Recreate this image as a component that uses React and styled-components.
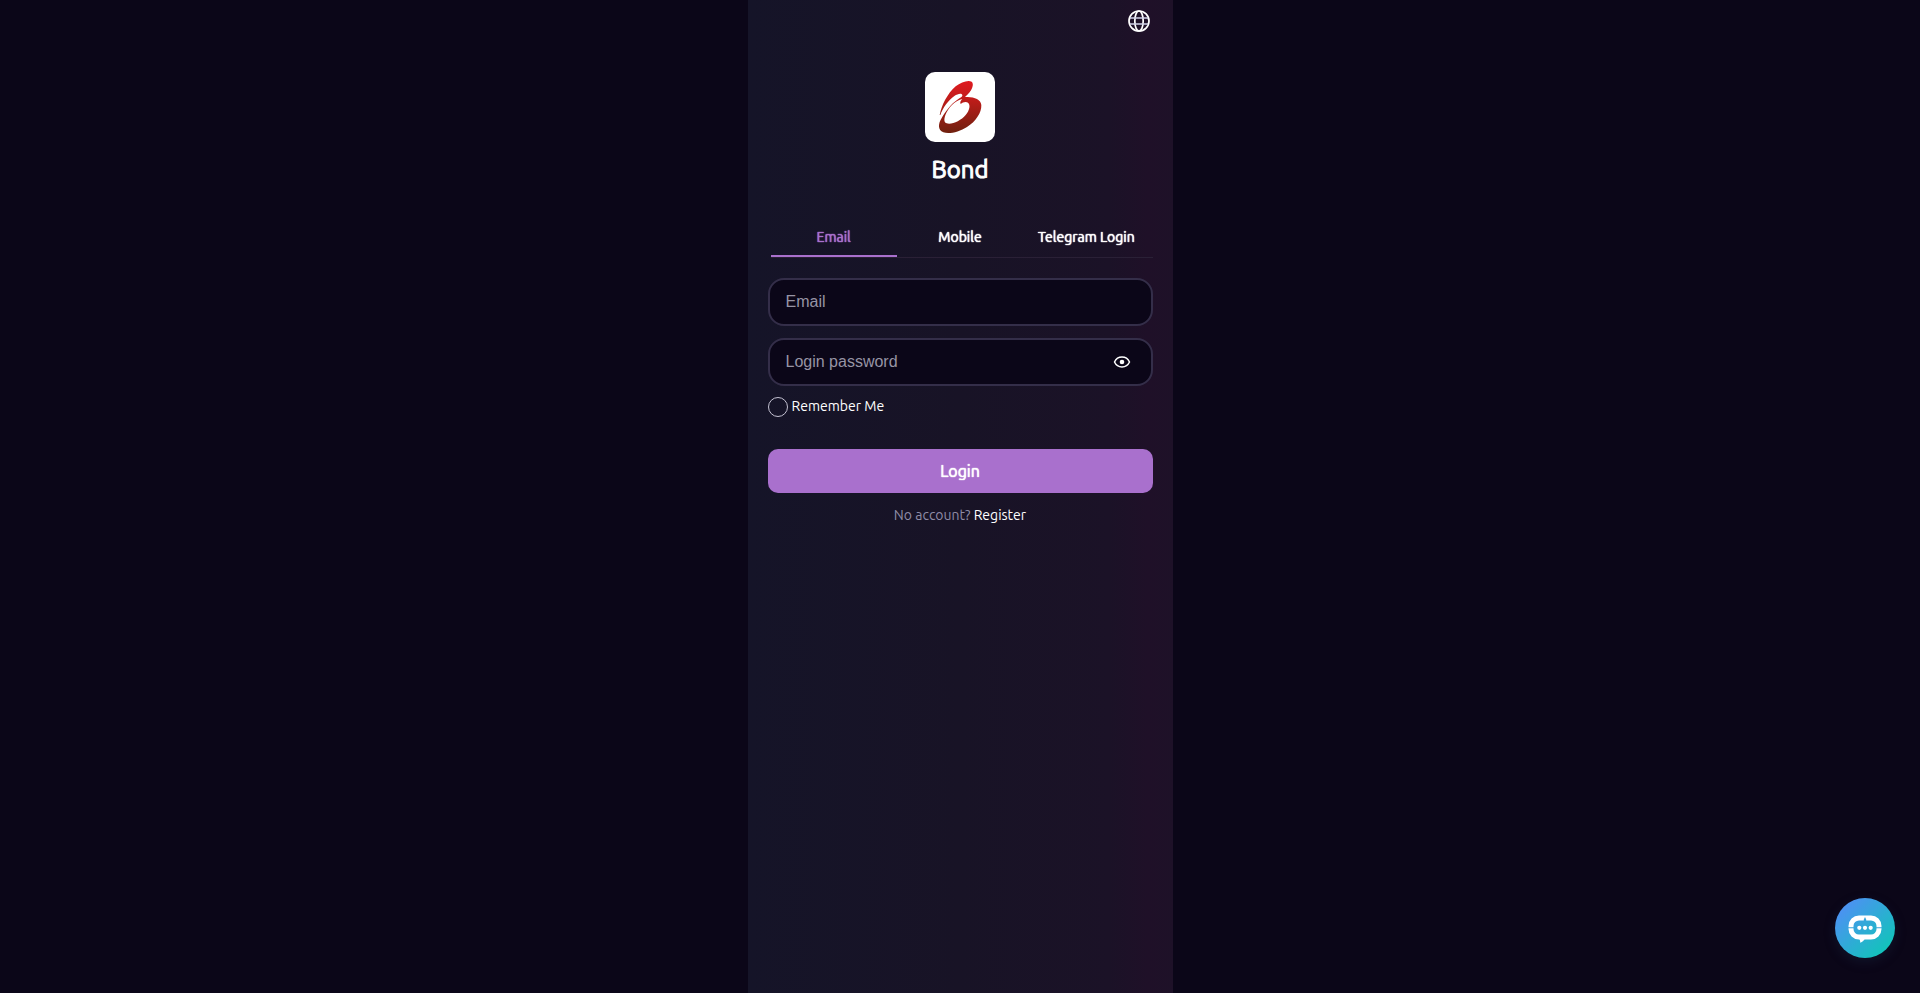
import React from "react";
import styled, { createGlobalStyle, css } from "styled-components";

const GlobalStyle = createGlobalStyle`
  * {
    box-sizing: border-box;
  }
  body {
    margin: 0;
    background-color: #0b0618;
    color: #ffffff;
    font-family: Ubuntu, "Noto Sans", sans-serif;
    font-size: 14px;
  }
  button {
    font-family: inherit;
    color: inherit;
    border: none;
    background: none;
    padding: 0;
    cursor: pointer;
  }
`;

const tabs = ["Email", "Mobile", "Telegram Login"];

const GlobeIcon = () => (
  <svg width="24" height="24" viewBox="0 0 24 24" fill="none" stroke="#ffffff" strokeWidth="1.7">
    <circle cx="12" cy="12" r="10" />
    <ellipse cx="12" cy="12" rx="4.2" ry="10" />
    <path d="M3 9h18M3 15h18" stroke="#cfcfe6" />
  </svg>
);

const EyeIcon = () => (
  <svg width="18" height="16" viewBox="0 0 18 16">
    <path
      d="M1.5 8C3 4.800 5.600 3.100 9 3.100s6 1.700 7.500 4.900c-1.500 3.200-4.100 4.900-7.500 4.900S3 11.200 1.500 8z"
      fill="none"
      stroke="#ffffff"
      strokeWidth="1.500"
    />
    <circle cx="9" cy="8" r="2.300" fill="#ffffff" />
  </svg>
);

const BondLogo = () => (
  <svg width="70" height="70" viewBox="0 0 210 210" role="img" aria-label="Bond logo">
    <defs>
      <linearGradient id="bond" x1="0" y1="26" x2="0" y2="184" gradientUnits="userSpaceOnUse">
        <stop offset="0" stopColor="#e01a20" />
        <stop offset="0.35" stopColor="#c01c1a" />
        <stop offset="1" stopColor="#6e200e" />
      </linearGradient>
    </defs>
    <path
      fill="url(#bond)"
      fillRule="evenodd"
      d="M44 129C50 100 66 66 92 43C108 30 130 23 140 29C148 36 143 55 120 75C145 73 168 81 169 99C170 122 152 149 126 165C103 180 72 187 55 181C38 174 39 155 50 138C61 118 79 95 97 83C106 77 113 74 112 69C110 62 98 65 88 72C70 86 54 106 46 129Z
         M112 81C98 83 81 96 69 114C57 133 54 151 65 154C80 159 108 146 122 129C134 114 137 99 129 92C125 88 113 89 107 96C104 91 107 86 112 81Z"
    />
    <path fill="#ffffff" d="M48 127C56 108 72 86 97 75C84 87 66 103 48 127Z" />
  </svg>
);

const ChatIcon = () => (
  <svg width="34" height="34" viewBox="0 -5 34 34">
    <rect x="3" y="2" width="28" height="19" rx="8" fill="none" stroke="#ffffff" strokeWidth="5" />
    <path d="M10.500 22h6.500c-.8 2.400-2.400 4-4.800 4.800.2-1.800-.4-3.400-1.700-4.800z" fill="#ffffff" />
    <path d="M0 11.300h6v1H0zM28 11.300h6v1h-6zM15.800 3.500L17 1l1.200 2.500V5h-2.400z" fill="#34a5dc" />
    <circle cx="11.300" cy="11.800" r="2.100" fill="#ffffff" />
    <circle cx="17" cy="11.800" r="2.100" fill="#ffffff" />
    <circle cx="22.700" cy="11.800" r="2.100" fill="#ffffff" />
  </svg>
);

const App = () => {
  const [activeTab, setActiveTab] = React.useState("Email");
  const [showPassword, setShowPassword] = React.useState(false);

  return (
    <Page>
      <GlobalStyle />
      <Panel>
        <TopBar>
          <button type="button" aria-label="Language">
            <GlobeIcon />
          </button>
        </TopBar>

        <Brand>
          <LogoBox>
            <BondLogo />
          </LogoBox>
          <BrandName>Bond</BrandName>
        </Brand>

        <TabList role="tablist">
          {tabs.map((tab) => (
            <Tab
              key={tab}
              type="button"
              role="tab"
              aria-selected={tab === activeTab}
              $active={tab === activeTab}
              onClick={() => setActiveTab(tab)}
            >
              {tab}
            </Tab>
          ))}
        </TabList>

        <Form onSubmit={(e) => e.preventDefault()}>
          <Field>
            <Input type="text" placeholder="Email" aria-label="Email" />
          </Field>
          <Field>
            <Input
              type={showPassword ? "text" : "password"}
              placeholder="Login password"
              aria-label="Login password"
            />
            <EyeButton
              type="button"
              aria-label="Show password"
              onClick={() => setShowPassword(!showPassword)}
            >
              <EyeIcon />
            </EyeButton>
          </Field>
          <Remember>
            <Checkbox type="checkbox" />
            <span>Remember Me</span>
          </Remember>
          <LoginButton type="submit">Login</LoginButton>
        </Form>

        <SignupText>
          No account? <RegisterLink href="#register">Register</RegisterLink>
        </SignupText>
      </Panel>

      <ChatButton type="button" aria-label="Customer service">
        <ChatIcon />
      </ChatButton>
    </Page>
  );
};

// regular weight thickened a little, keeps the narrow letter widths
const strongText = css`
  font-weight: 400;
  text-shadow: 0 0 1px currentColor, 0 0 1px currentColor;
`;

const Page = styled.div`
  display: flex;
  justify-content: center;
  min-height: 100vh;
`;

const Panel = styled.main`
  width: 100%;
  max-width: 425px;
  padding: 0 20px;
  background: linear-gradient(90deg, #151428 0%, #181326 50%, #1b1227 85%, #1f1028 94%, #1e1128 100%);
`;

const TopBar = styled.div`
  display: flex;
  justify-content: flex-end;
  align-items: center;
  height: 42px;
  padding-right: 2px;

  svg {
    display: block;
  }
`;

const Brand = styled.div`
  display: flex;
  flex-direction: column;
  align-items: center;
  padding-top: 30px;
`;

const LogoBox = styled.div`
  width: 70px;
  height: 70px;
  border-radius: 10px;
  background-color: #ffffff;
`;

const BrandName = styled.h1`
  margin: 12px 0 0;
  font-size: 24px;
  line-height: 32px;
  font-weight: 400;
  -webkit-text-stroke: 1px currentColor;
`;

const TabList = styled.div`
  display: flex;
  margin: 31px 0 0 3px;
  padding-right: 3px;
  border-bottom: 1px solid #2a2036;
`;

const Tab = styled.button`
  flex: 1 1 0;
  height: 40px;
  font-size: 14px;
  white-space: nowrap;
  ${strongText}

  && {
    padding-top: 2px;
    color: ${({ $active }) => ($active ? "#a970cd" : "#ffffff")};
    border-bottom: 2px solid ${({ $active }) => ($active ? "#a970cd" : "transparent")};
  }
`;

const Form = styled.form`
  display: flex;
  flex-direction: column;
  margin-top: 20px;
`;

const Field = styled.div`
  display: flex;
  align-items: center;
  height: 48px;
  padding: 0 20px 0 16px;
  border: 2px solid #342e49;
  border-radius: 16px;
  background-color: #0b0618;

  & + & {
    margin-top: 12px;
  }
`;

const Input = styled.input`
  flex: 1;
  min-width: 0;
  padding: 0;
  border: none;
  outline: none;
  background: transparent;
  color: #ffffff;
  font-family: "Liberation Sans", Arial, sans-serif;
  font-size: 16px;

  &::placeholder {
    color: #9794a5;
  }
`;

const EyeButton = styled.button`
  svg {
    display: block;
  }
`;

const Remember = styled.label`
  display: flex;
  align-items: center;
  gap: 4px;
  height: 20px;
  margin: 11px 0 32px;
  cursor: pointer;

  span {
    height: 20px;
    line-height: 18px;
  }
`;

const Checkbox = styled.input`
  appearance: none;
  width: 20px;
  height: 20px;
  margin: 0;
  border: 1px solid #c4c2d2;
  border-radius: 50%;

  &:checked {
    background-color: #a970cd;
  }
`;

const LoginButton = styled.button`
  && {
    height: 44px;
    border-radius: 10px;
    background-color: #a970cd;
    font-size: 16px;
  }
  ${strongText}
`;

const SignupText = styled.p`
  margin: 12px 0 0;
  line-height: 20px;
  text-align: center;
  color: #8f8ca6;
`;

const RegisterLink = styled.a`
  color: #ffffff;
  text-decoration: none;
`;

const ChatButton = styled.button`
  && {
    position: fixed;
    right: 25px;
    bottom: 35px;
    display: flex;
    align-items: center;
    justify-content: center;
    width: 60px;
    height: 60px;
    border-radius: 50%;
    background: linear-gradient(135deg, #4f8ff5 10%, #2fabd6 50%, #0fc6b8 90%);
    box-shadow: 0 4px 12px rgba(30, 60, 90, 0.25);
  }
`;

export default App;
